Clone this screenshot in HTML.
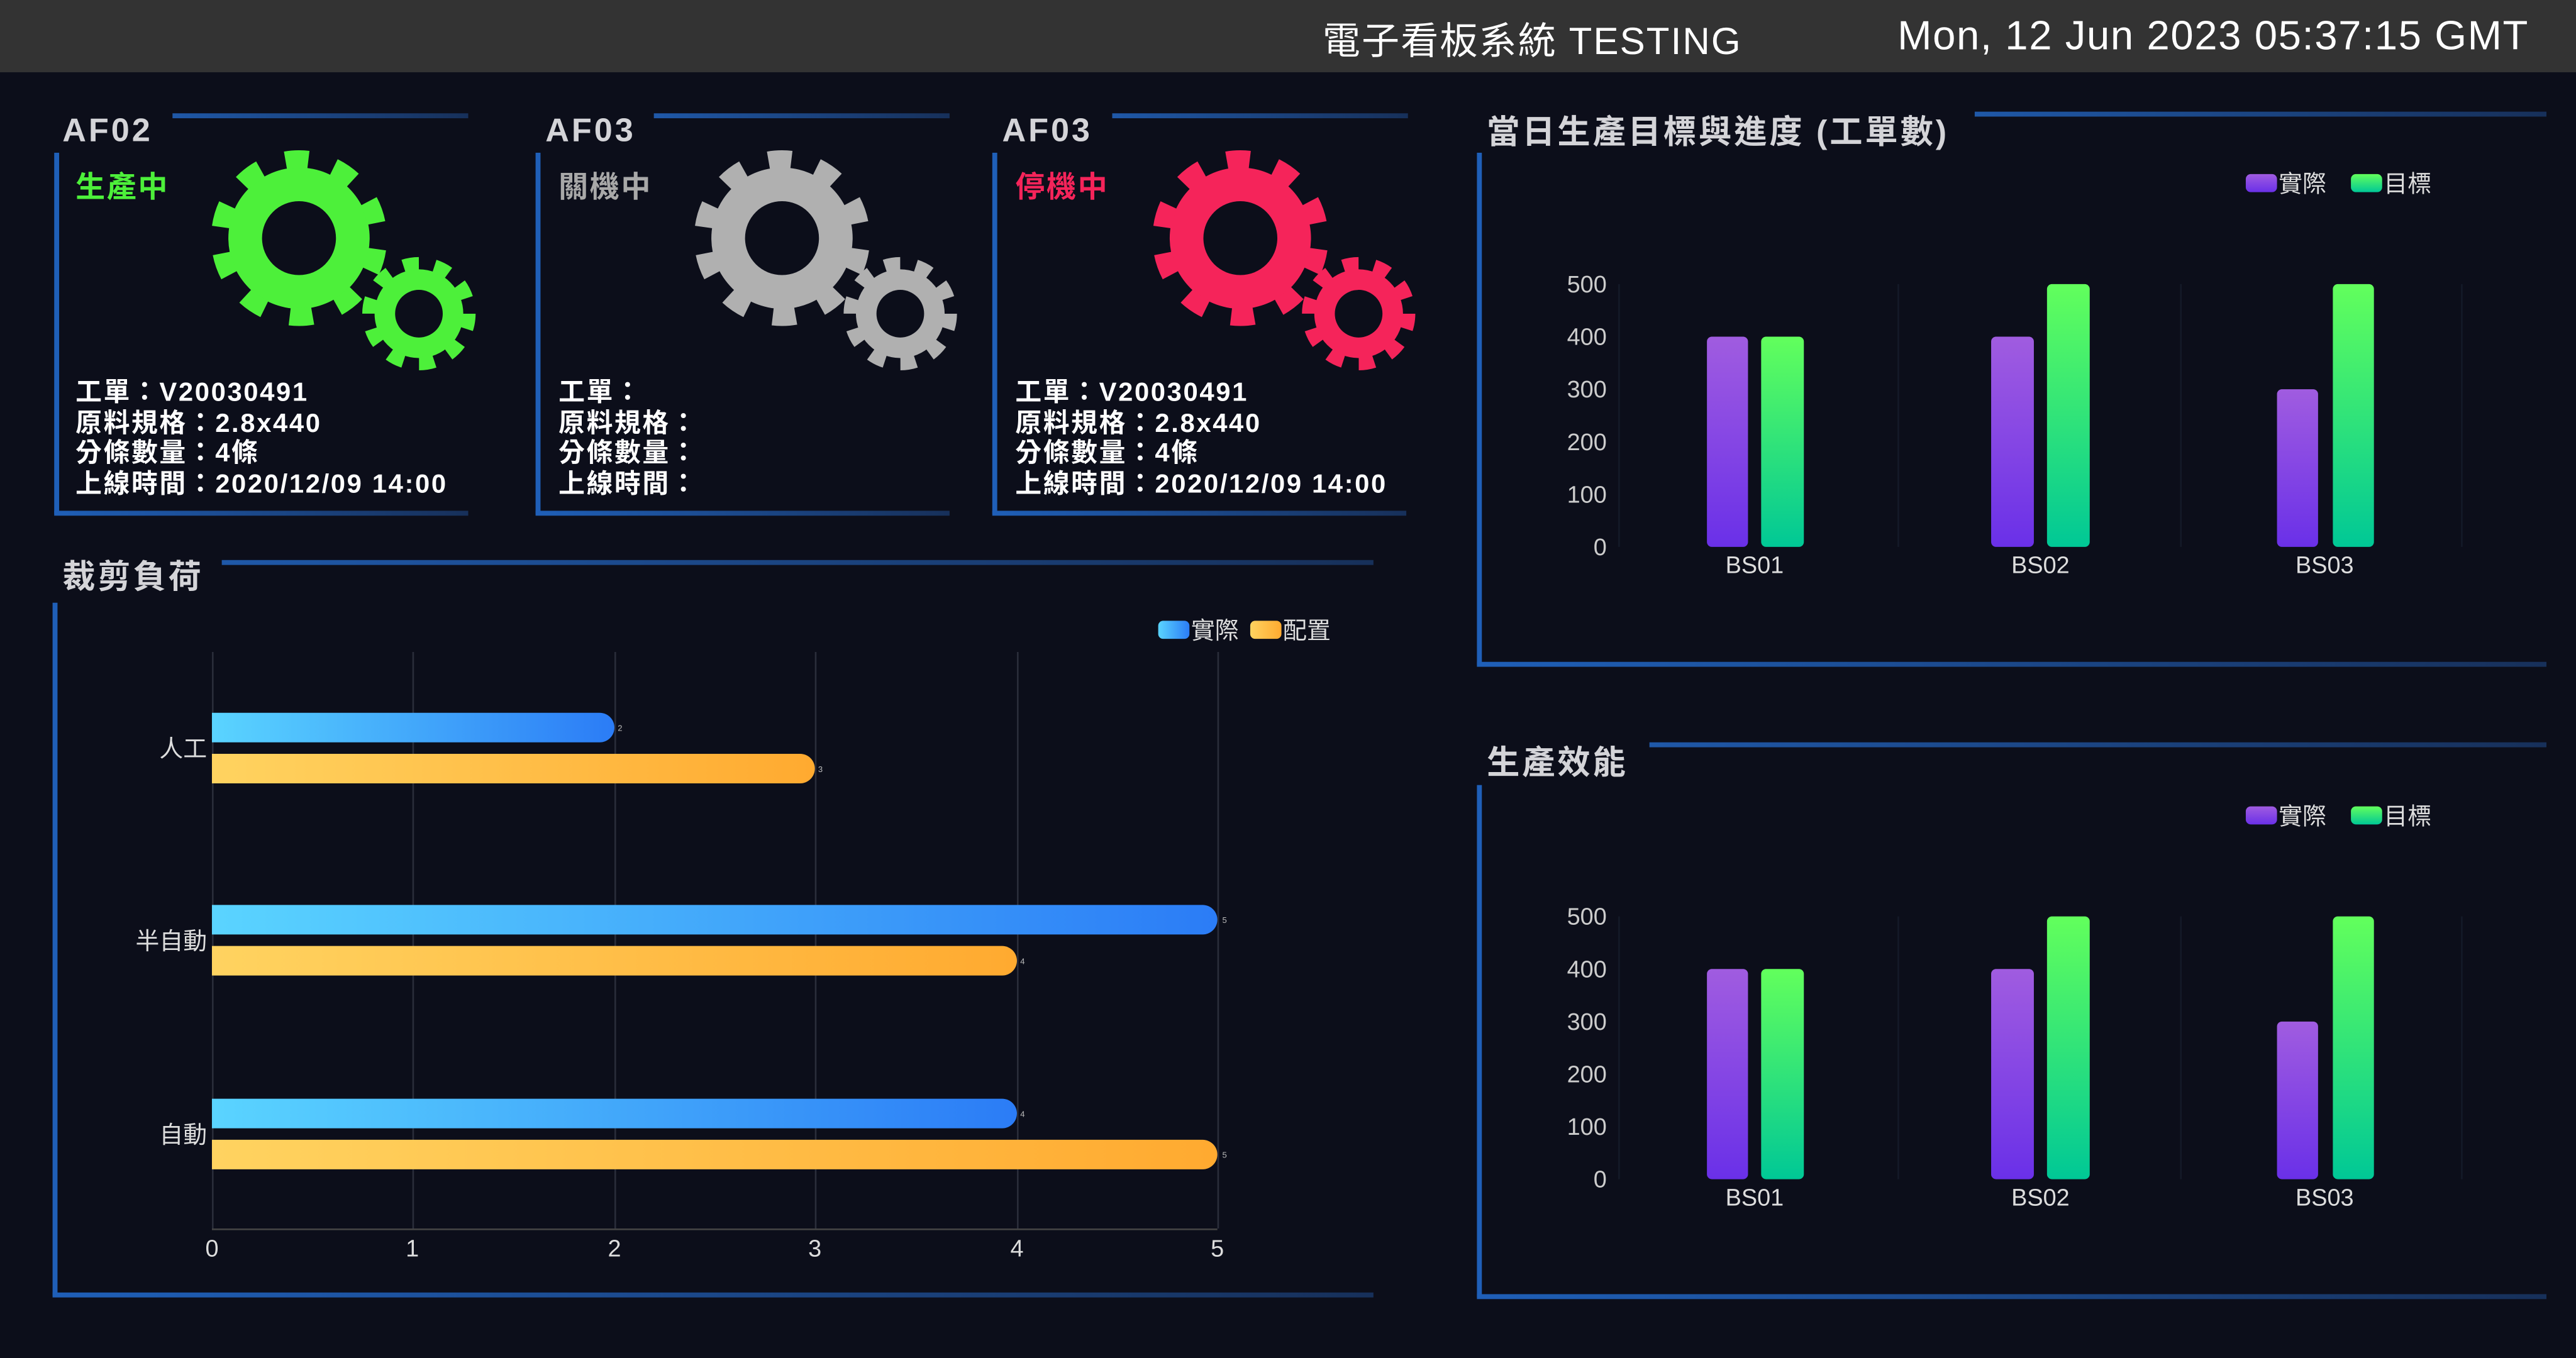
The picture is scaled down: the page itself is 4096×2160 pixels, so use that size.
<!DOCTYPE html>
<html><head><meta charset="utf-8">
<style>
html,body{margin:0;padding:0;background:#0c0e1a;overflow:hidden;width:4096px;height:2160px}
#w{position:absolute;left:0;top:0;width:1568px;height:827px;transform:scale(2.612245);transform-origin:0 0;background:#0c0e1a;font-family:"Liberation Sans","Noto Sans CJK TC",sans-serif;color:#ddd}
.a{position:absolute;white-space:nowrap}
.hdr{position:absolute;left:0;top:0;width:1568px;height:44px;background:#333}
.tl{position:absolute;height:3px;background:linear-gradient(90deg,#1f58a8,#17305a)}
.lb{position:absolute;width:3px;background:#1f5fb8}
.bb{position:absolute;height:3px;background:linear-gradient(90deg,#1f5fb8,#17305a)}
.ttl{font-size:20px;font-weight:bold;color:#d4d4d8;letter-spacing:1.5px}
.info{font-size:16px;font-weight:bold;color:#fff;line-height:18.5px;letter-spacing:1px}
</style></head><body><div id="w">
<div class="hdr"></div>
<div class="a" style="left:805px;top:6px;font-size:23px;color:#fff;letter-spacing:0.8px">電子看板系統 TESTING</div>
<div class="a" style="left:1155px;top:8px;font-size:25px;color:#fff;letter-spacing:0.6px">Mon, 12 Jun 2023 05:37:15 GMT</div>

<svg class="a" style="left:0;top:0" width="1568" height="827">
<defs>
<g id="gear">
<circle r="43" fill="currentColor"/>
<circle r="48" fill="none" stroke="currentColor" stroke-width="11" stroke-dasharray="14 16.16" transform="rotate(8)"/>
<circle r="22.5" fill="#0c0e1a"/>
</g>
<g id="sgear">
<circle r="27" fill="currentColor"/>
<circle r="30.5" fill="none" stroke="currentColor" stroke-width="8" stroke-dasharray="9.5 9.66"/>
<circle r="14.5" fill="#0c0e1a"/>
</g>
</defs>
<g color="#4df03a"><use href="#gear" x="182" y="145"/><use href="#sgear" x="255" y="191"/></g>
<g color="#b0b0b0"><use href="#gear" x="476" y="145"/><use href="#sgear" x="548" y="191"/></g>
<g color="#f5245a"><use href="#gear" x="755" y="145"/><use href="#sgear" x="827" y="191"/></g>
</svg>

<div class="a ttl" style="left:38px;top:69px">AF02</div>
<div class="tl" style="left:105px;top:69px;width:180px"></div>
<div class="lb" style="left:33px;top:93px;height:220px"></div>
<div class="bb" style="left:33px;top:311px;width:252px"></div>
<div class="a" style="left:46px;top:100px;font-size:18px;font-weight:bold;color:#4df03a;letter-spacing:1px">生產中</div>
<div class="a info" style="left:46px;top:231px">工單：V20030491<br>原料規格：2.8x440<br>分條數量：4條<br>上線時間：2020/12/09 14:00</div>

<div class="a ttl" style="left:332px;top:69px">AF03</div>
<div class="tl" style="left:398px;top:69px;width:180px"></div>
<div class="lb" style="left:326px;top:93px;height:220px"></div>
<div class="bb" style="left:326px;top:311px;width:252px"></div>
<div class="a" style="left:340px;top:100px;font-size:18px;font-weight:bold;color:#a8a8a8;letter-spacing:1px">關機中</div>
<div class="a info" style="left:340px;top:231px">工單：<br>原料規格：<br>分條數量：<br>上線時間：</div>

<div class="a ttl" style="left:610px;top:69px">AF03</div>
<div class="tl" style="left:677px;top:69px;width:180px"></div>
<div class="lb" style="left:604px;top:93px;height:220px"></div>
<div class="bb" style="left:604px;top:311px;width:252px"></div>
<div class="a" style="left:618px;top:100px;font-size:18px;font-weight:bold;color:#f5245a;letter-spacing:1px">停機中</div>
<div class="a info" style="left:618px;top:231px">工單：V20030491<br>原料規格：2.8x440<br>分條數量：4條<br>上線時間：2020/12/09 14:00</div>

<div class="a ttl" style="left:38px;top:335px">裁剪負荷</div>
<div class="tl" style="left:135px;top:341px;width:701px"></div>
<div class="lb" style="left:32px;top:367px;height:422px"></div>
<div class="bb" style="left:32px;top:787px;width:804px"></div>
<svg class="a" style="left:0;top:0" width="1568" height="827">
<defs>
<linearGradient id="bl" x1="0" x2="1"><stop offset="0" stop-color="#5ad4ff"/><stop offset="1" stop-color="#2b7cf6"/></linearGradient>
<linearGradient id="or" x1="0" x2="1"><stop offset="0" stop-color="#ffd360"/><stop offset="1" stop-color="#ffaa30"/></linearGradient>
<linearGradient id="pu" x1="0" y1="0" x2="0" y2="1"><stop offset="0" stop-color="#a05ce0"/><stop offset="1" stop-color="#6a30e8"/></linearGradient>
<linearGradient id="gr" x1="0" y1="0" x2="0" y2="1"><stop offset="0" stop-color="#62ff5c"/><stop offset="1" stop-color="#00c896"/></linearGradient>
</defs>
<g stroke="#2a2d3a" stroke-width="1">
<line x1="129.5" y1="397" x2="129.5" y2="748"/><line x1="251.5" y1="397" x2="251.5" y2="748"/><line x1="374.5" y1="397" x2="374.5" y2="748"/><line x1="496.5" y1="397" x2="496.5" y2="748"/><line x1="619.5" y1="397" x2="619.5" y2="748"/><line x1="741.5" y1="397" x2="741.5" y2="748"/>
<line x1="129" y1="748.5" x2="741" y2="748.5" stroke="#444"/>
</g>
<g>
<path d="M129 434 H365 A9 9 0 0 1 365 452 H129Z" fill="url(#bl)"/>
<path d="M129 459 H487 A9 9 0 0 1 487 477 H129Z" fill="url(#or)"/>
<path d="M129 551 H732 A9 9 0 0 1 732 569 H129Z" fill="url(#bl)"/>
<path d="M129 576 H610 A9 9 0 0 1 610 594 H129Z" fill="url(#or)"/>
<path d="M129 669 H610 A9 9 0 0 1 610 687 H129Z" fill="url(#bl)"/>
<path d="M129 694 H732 A9 9 0 0 1 732 712 H129Z" fill="url(#or)"/>
</g>
<g font-size="5" fill="#bbb" font-family="Liberation Sans">
<text x="376" y="445">2</text><text x="498" y="470">3</text><text x="744" y="562">5</text><text x="621" y="587">4</text><text x="621" y="680">4</text><text x="744" y="705">5</text>
</g>
<g font-size="14.5" fill="#ddd" font-family="Liberation Sans" text-anchor="middle">
<text x="129" y="765">0</text><text x="251" y="765">1</text><text x="374" y="765">2</text><text x="496" y="765">3</text><text x="619" y="765">4</text><text x="741" y="765">5</text>
</g>
<g font-size="14.5" fill="#ddd" font-family="Liberation Sans,Noto Sans CJK TC,sans-serif" text-anchor="end">
<text x="126" y="461">人工</text><text x="126" y="578">半自動</text><text x="126" y="696">自動</text>
</g>
<rect x="705" y="378" width="19" height="11" rx="3" fill="url(#bl)"/>
<rect x="761" y="378" width="19" height="11" rx="3" fill="url(#or)"/>
<g font-size="14.5" fill="#ddd" font-family="Liberation Sans,Noto Sans CJK TC,sans-serif"><text x="725" y="389">實際</text><text x="781" y="389">配置</text></g>

<g id="rc">
<g stroke="#141a28" stroke-width="1"><line x1="985.5" y1="173" x2="985.5" y2="333"/><line x1="1155.5" y1="173" x2="1155.5" y2="333"/><line x1="1327.5" y1="173" x2="1327.5" y2="333"/><line x1="1498.5" y1="173" x2="1498.5" y2="333"/></g>
<g font-size="14.5" fill="#ccc" font-family="Liberation Sans" text-anchor="end">
<text x="978" y="178">500</text><text x="978" y="210">400</text><text x="978" y="242">300</text><text x="978" y="274">200</text><text x="978" y="306">100</text><text x="978" y="338">0</text>
</g>
<rect x="1039" y="205" width="25" height="128" rx="3" fill="url(#pu)"/>
<rect x="1072" y="205" width="26" height="128" rx="3" fill="url(#gr)"/>
<rect x="1212" y="205" width="26" height="128" rx="3" fill="url(#pu)"/>
<rect x="1246" y="173" width="26" height="160" rx="3" fill="url(#gr)"/>
<rect x="1386" y="237" width="25" height="96" rx="3" fill="url(#pu)"/>
<rect x="1420" y="173" width="25" height="160" rx="3" fill="url(#gr)"/>
<g font-size="14.5" fill="#ddd" font-family="Liberation Sans" text-anchor="middle"><text x="1068" y="349">BS01</text><text x="1242" y="349">BS02</text><text x="1415" y="349">BS03</text></g>
<rect x="1367" y="106" width="19" height="11" rx="3" fill="url(#pu)"/>
<rect x="1431" y="106" width="19" height="11" rx="3" fill="url(#gr)"/>
<g font-size="14.5" fill="#ddd" font-family="Liberation Sans,Noto Sans CJK TC,sans-serif"><text x="1387" y="117">實際</text><text x="1451" y="117">目標</text></g>
</g>
<use href="#rc" y="385"/>
</svg>

<div class="a ttl" style="left:905px;top:64px">當日生產目標與進度 (工單數)</div>
<div class="tl" style="left:1202px;top:68px;width:348px"></div>
<div class="lb" style="left:899px;top:93px;height:312px"></div>
<div class="bb" style="left:899px;top:403px;width:651px"></div>

<div class="a ttl" style="left:905px;top:448px">生產效能</div>
<div class="tl" style="left:1004px;top:452px;width:546px"></div>
<div class="lb" style="left:899px;top:478px;height:312px"></div>
<div class="bb" style="left:899px;top:788px;width:651px"></div>
</div></body></html>
